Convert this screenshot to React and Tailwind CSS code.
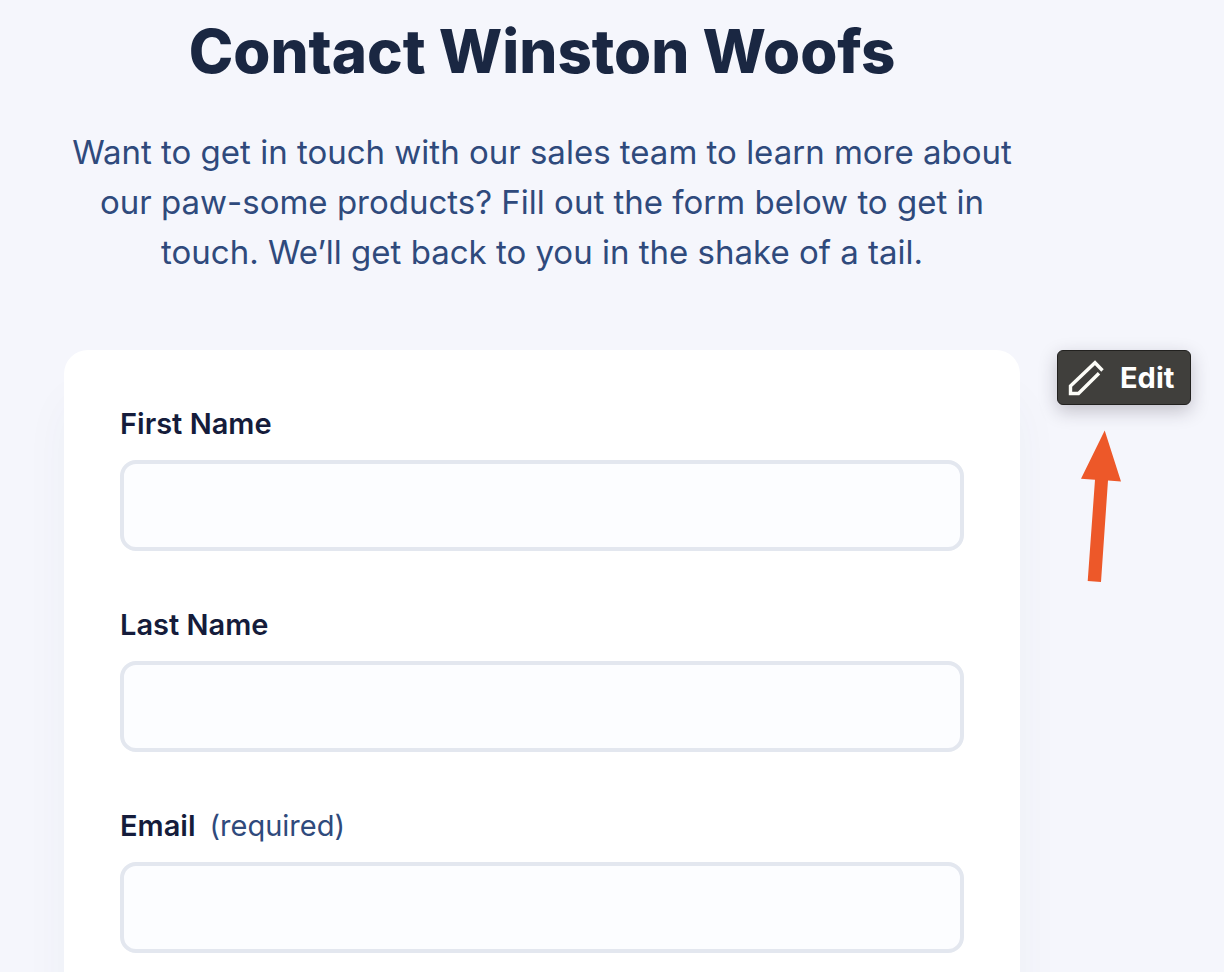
import React, { useState } from "react";

const fields = [
  { id: "firstName", label: "First Name", type: "text" },
  { id: "lastName", label: "Last Name", type: "text" },
  { id: "email", label: "Email", type: "email", required: true },
];

const App = () => {
  const [values, setValues] = useState({ firstName: "", lastName: "", email: "" });

  return (
    <div className="h-screen overflow-hidden bg-[#f5f6fc] font-['Inter',sans-serif]">
      <div className="grid grid-cols-[1fr_204px] pl-16">
        <header className="text-center">
          <h1 className="pt-3 text-6xl leading-[78px] font-extrabold text-[#1a2742]">
            Contact Winston Woofs
          </h1>
          <p className="mt-[37px] text-[33px] leading-[50px] text-[#2f4a7c]">
            Want to get in touch with our sales team to learn more about our
            paw-some products? Fill out the form below to get in touch. We’ll get
            back to you in the shake of a tail.
          </p>
        </header>

        {/* Contact form */}
        <form className="col-start-1 mt-[73px] rounded-t-3xl bg-white px-14 pt-14 shadow-[0_48px_48px_rgba(60,70,100,0.04)]">
          {fields.map((field) => (
            <div key={field.id} className="mb-14">
              <label
                htmlFor={field.id}
                className="block text-[29px] leading-9 font-semibold text-[#151c3b]"
              >
                {field.label}
                {field.required && (
                  <span className="ml-3.5 font-normal text-[#2f4a7c]">(required)</span>
                )}
              </label>
              <input
                id={field.id}
                type={field.type}
                required={field.required}
                value={values[field.id]}
                onChange={(e) => setValues({ ...values, [field.id]: e.target.value })}
                className="mt-[18px] block h-[91px] w-full rounded-2xl border-4 border-[#e3e7ef] bg-[#fcfdff] px-6 text-3xl"
              />
            </div>
          ))}
        </form>

        {/* Edit button and the arrow pointing at it */}
        <aside className="mt-[73px] pl-[37px]">
          <button
            type="button"
            className="flex h-[55px] items-center gap-4 rounded-md border border-[#22211f] bg-[#403f3c] pr-4 pl-2.5 text-[29px] font-bold text-white shadow-[0_6px_18px_rgba(40,30,50,0.25)]"
          >
            <svg className="size-9 shrink-0" viewBox="0 0 36 36" fill="none" stroke="#fdfdf8" strokeWidth="3.4">
              <path d="M34.5 10.5L27 2.7L2.5 26V33.5H10.5L31 13.2" />
            </svg>
            Edit
          </button>
          <svg className="mt-[25px] ml-6 h-[152px] w-10" viewBox="0 0 40 152" fill="#ed5829">
            <path d="M23.7 0.5L40 51.5L27 50.5L20 152L6.7 151L14 49.8L0 48.8Z" />
          </svg>
        </aside>
      </div>
    </div>
  );
};

export default App;
